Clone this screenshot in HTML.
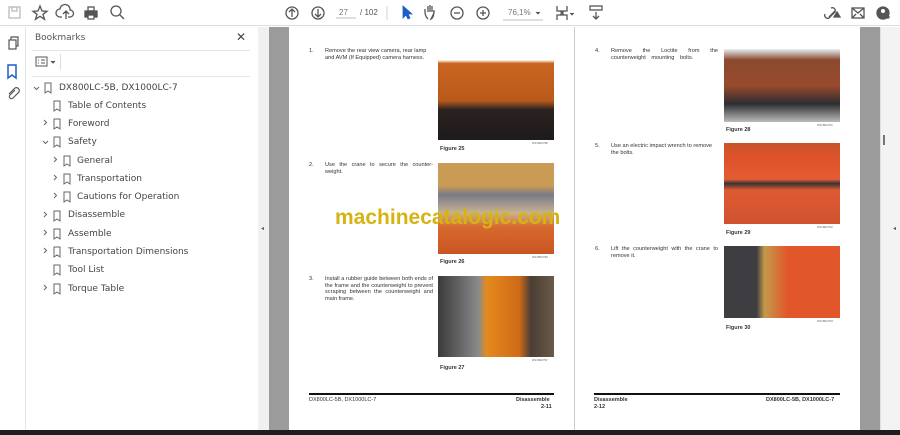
<!DOCTYPE html>
<html><head><meta charset="utf-8"><style>
*{margin:0;padding:0;box-sizing:border-box}
body{width:900px;height:435px;overflow:hidden;background:#fff;font-family:"Liberation Sans",sans-serif;position:relative;color:#333}
.a{position:absolute}
.tb{left:0;top:0;width:900px;height:26px;background:#fff;border-bottom:1px solid #ddd}
.bm{font-family:"DejaVu Sans","Liberation Sans",sans-serif;font-size:9px;color:#444;position:absolute;white-space:nowrap}
.pt{font-size:5.6px;color:#333;line-height:6.5px;position:absolute}
.fig{font-size:5.5px;font-weight:bold;position:absolute}
.code{font-size:3px;color:#666;position:absolute}
</style></head><body>
<div class="a tb"></div>
<svg class="a" style="left:0;top:0" width="900" height="26" fill="none" stroke="#555" stroke-width="1.3">
<rect x="9" y="7" width="11" height="11" stroke="#bbb"/><rect x="12" y="7" width="5" height="4" stroke="#bbb"/>
<path d="M40 6l2 5 5 .3-4 3 1.5 5-4.5-3-4.5 3 1.5-5-4-3 5-.3z"/>
<path d="M62 17h-2a4 4 0 0 1 0-8 5 5 0 0 1 10 1 3 3 0 0 1 0 7h-2M66 19v-8m-3 3l3-3 3 3"/>
<rect x="85" y="11" width="12" height="6" fill="#555"/><rect x="88" y="7" width="6" height="4"/><rect x="88" y="15" width="6" height="4" fill="#fff"/>
<circle cx="116" cy="11" r="5"/><path d="M120 15l4 4"/>
<circle cx="292" cy="13" r="6"/><path d="M292 17v-8m-3 3l3-3 3 3"/>
<circle cx="318" cy="13" r="6"/><path d="M318 9v8m-3-3l3 3 3-3"/>
<path d="M336 18h20" stroke="#ccc"/><path d="M387 6v14" stroke="#ddd"/>
<path d="M403 6v12l3-3 2 4 2-1-2-4h4z" fill="#1a5fc8" stroke="#1a5fc8" stroke-width=".8"/>
<path d="M428 19c-2-2-3-5-3-7v-3m3 3v-6m2 6v-7m2 7v-6m2 7v-3c0 5-1 8-3 9z"/>
<circle cx="457" cy="13" r="6"/><path d="M454 13h6"/>
<circle cx="483" cy="13" r="6"/><path d="M480 13h6m-3-3v6"/>
<path d="M503 20h40" stroke="#ccc"/><path d="M536 12l2 2 2-2" fill="#555" stroke-width=".8"/>
<path d="M557 6v5h10V6M557 20v-5h10v5M560 11l4 4M564 11l-4 4" />
<path d="M570 13l2 2 2-2" fill="#555" stroke-width=".8"/>
<rect x="590" y="6" width="12" height="4"/><path d="M596 12v7m-3-3l3 3 3-3"/>
<path d="M829 17l6-6m-4-3a3 3 0 0 1 4 4l-6 6a3 3 0 0 1-4-4"/><path d="M834 17l3-5 3 5z" fill="#555"/>
<rect x="852" y="8" width="12" height="10"/><path d="M852 8l6 5 6-5M852 18l4-4m8 4l-4-4"/>
<circle cx="883" cy="13" r="6" fill="#555"/><circle cx="883" cy="11" r="2" fill="#fff" stroke="none"/><path d="M888 15v4m-2-2h4" stroke="#555"/>
</svg>
<div class="a" style="left:339px;top:8px;font-size:8px;color:#777">27</div>
<div class="a" style="left:360px;top:8px;font-size:8px;color:#555">/ 102</div>
<div class="a" style="left:508px;top:8px;font-size:8px;color:#777">76,1%</div>

<div class="a" style="left:0;top:27px;width:26px;height:403px;background:#fff;border-right:1px solid #e5e5e5"></div>
<svg class="a" style="left:0;top:27px" width="26" height="80" fill="none" stroke="#555" stroke-width="1.2">
<rect x="9" y="13" width="7" height="9"/><path d="M11 13v-3h7v9h-2"/>
<path d="M8 38h8v13l-4-3-4 3z" stroke="#1a5fc8" stroke-width="1.5"/>
<path d="M15 63l-5 5a2 2 0 0 0 3 3l6-6a3 3 0 0 0-4-4l-6 6"/>
</svg>
<div class="a" style="left:26px;top:27px;width:232px;height:403px;background:#fff"></div>
<div class="bm" style="left:35px;top:33px;font-size:9px;color:#555">Bookmarks</div>
<div class="bm" style="left:236px;top:30px;font-size:12px;color:#444">✕</div>
<div class="a" style="left:32px;top:50px;width:218px;height:1px;background:#e5e5e5"></div>
<svg class="a" style="left:34px;top:54px" width="30" height="16" fill="none" stroke="#555"><rect x="2" y="3" width="11" height="9"/><path d="M4 6h1m2 0h4M4 9h1m2 0h4"/><path d="M17 7l2 2 2-2" fill="#555"/></svg>
<div class="a" style="left:60px;top:54px;width:1px;height:16px;background:#ddd"></div>
<div class="a" style="left:32px;top:76px;width:218px;height:1px;background:#e5e5e5"></div>
<svg class="a" style="left:30px;top:80px" width="160" height="220" fill="none" stroke="#666" stroke-width="1">
<path d="M4 7l2.5 2.5L9 7"/><path d="M15 3h6v10l-3-2-3 2z"/>
<path d="M24 21h6v10l-3-2-3 2z"/>
<path d="M14 40l2.5 2.5L14 45"/><path d="M24 39h6v10l-3-2-3 2z"/>
<path d="M13 61l2.5 2.5L18 61"/><path d="M24 57h6v10l-3-2-3 2z"/>
<path d="M24 77l2.5 2.5L24 82"/><path d="M34 76h6v10l-3-2-3 2z"/>
<path d="M24 95l2.5 2.5L24 100"/><path d="M34 94h6v10l-3-2-3 2z"/>
<path d="M24 113l2.5 2.5L24 118"/><path d="M34 112h6v10l-3-2-3 2z"/>
<path d="M14 132l2.5 2.5L14 137"/><path d="M24 131h6v10l-3-2-3 2z"/>
<path d="M14 150l2.5 2.5L14 155"/><path d="M24 149h6v10l-3-2-3 2z"/>
<path d="M14 168l2.5 2.5L14 173"/><path d="M24 167h6v10l-3-2-3 2z"/>
<path d="M24 185h6v10l-3-2-3 2z"/>
<path d="M14 205l2.5 2.5L14 210"/><path d="M24 204h6v10l-3-2-3 2z"/>
</svg>
<div class="bm" style="left:59px;top:83px">DX800LC-5B, DX1000LC-7</div>
<div class="bm" style="left:68px;top:101px">Table of Contents</div>
<div class="bm" style="left:68px;top:119px">Foreword</div>
<div class="bm" style="left:68px;top:137px">Safety</div>
<div class="bm" style="left:77px;top:156px">General</div>
<div class="bm" style="left:77px;top:174px">Transportation</div>
<div class="bm" style="left:77px;top:192px">Cautions for Operation</div>
<div class="bm" style="left:68px;top:210px">Disassemble</div>
<div class="bm" style="left:68px;top:229px">Assemble</div>
<div class="bm" style="left:68px;top:247px">Transportation Dimensions</div>
<div class="bm" style="left:68px;top:265px">Tool List</div>
<div class="bm" style="left:68px;top:284px">Torque Table</div>

<div class="a" style="left:258px;top:27px;width:11px;height:403px;background:#f0f0f0"></div>
<div class="a" style="left:261px;top:225px;font-size:6px;color:#555">◂</div>
<div class="a" style="left:269px;top:27px;width:20px;height:403px;background:#9b9b9b"></div>
<div class="a" style="left:289px;top:27px;width:571px;height:403px;background:#fff"></div>
<div class="a" style="left:574px;top:27px;width:1px;height:403px;background:#ccc"></div>
<div class="a" style="left:860px;top:27px;width:20px;height:403px;background:#9b9b9b"></div>
<div class="a" style="left:880px;top:27px;width:20px;height:403px;background:#f3f3f3;border-left:1px solid #e0e0e0"></div>
<div class="a" style="left:883px;top:135px;width:2px;height:10px;background:#777"></div>
<div class="a" style="left:893px;top:225px;font-size:6px;color:#555">◂</div>
<div class="a" style="left:0;top:430px;width:900px;height:5px;background:#1e1e1e"></div>

<div class="pt" style="left:309px;top:48px">1.</div>
<div class="pt" style="left:325px;top:48px;width:108px">Remove the rear view camera, rear lamp and AVM (If Equipped) camera harness.</div>
<div class="a" style="left:438px;top:53px;width:116px;height:87px;background:linear-gradient(180deg,#fff 0 8%,#c9651f 12%,#b85a1c 55%,#2a2220 65%,#1e1b1c 100%)"></div>
<div class="code" style="left:532px;top:141px">DS1802798</div>
<div class="fig" style="left:440px;top:146px">Figure 25</div>
<div class="pt" style="left:309px;top:162px">2.</div>
<div class="pt" style="left:325px;top:162px;width:108px;text-align:justify;word-spacing:2px">Use the crane to secure the counter-weight.</div>
<div class="a" style="left:438px;top:163px;width:116px;height:91px;background:linear-gradient(180deg,#c99b54 0 25%,#7a7a88 35%,#c7b38e 55%,#d86a2c 70%,#c85522 100%)"></div>
<div class="code" style="left:532px;top:255px">DS1802799</div>
<div class="fig" style="left:440px;top:259px">Figure 26</div>
<div class="pt" style="left:309px;top:276px">3.</div>
<div class="pt" style="left:325px;top:276px;width:108px;text-align:justify">Install a rubber guide between both ends of the frame and the counterweight to prevent scraping between the counterweight and main frame.</div>
<div class="a" style="left:438px;top:276px;width:116px;height:81px;background:linear-gradient(90deg,#3a3a3a 0,#8a8a8a 35%,#e48a1c 42%,#d06a18 70%,#4a3f35 80%,#6a5a48 100%)"></div>
<div class="code" style="left:532px;top:358px">DS1802797</div>
<div class="fig" style="left:440px;top:365px">Figure 27</div>
<div class="a" style="left:309px;top:393px;width:245px;height:2px;background:#111"></div>
<div class="fig" style="left:309px;top:397px;font-weight:normal">DX800LC-5B, DX1000LC-7</div>
<div class="fig" style="left:516px;top:397px">Disassemble</div>
<div class="fig" style="left:541px;top:404px">2-11</div>

<div class="pt" style="left:595px;top:48px">4.</div>
<div class="pt" style="left:611px;top:48px;width:107px;text-align:justify;word-spacing:4px">Remove the Loctite from the counterweight mounting bolts.</div>
<div class="a" style="left:724px;top:49px;width:116px;height:73px;background:linear-gradient(180deg,#e8eef3 0,#8a4a30 15%,#9a4a2c 50%,#2d2d30 75%,#bbb 100%)"></div>
<div class="code" style="left:817px;top:123px">DS1802791</div>
<div class="fig" style="left:726px;top:127px">Figure 28</div>
<div class="pt" style="left:595px;top:143px">5.</div>
<div class="pt" style="left:611px;top:143px;width:107px">Use an electric impact wrench to remove the bolts.</div>
<div class="a" style="left:724px;top:143px;width:116px;height:81px;background:linear-gradient(180deg,#c85528 0,#e0532a 20%,#e25c33 45%,#333 50%,#df5a32 58%,#cf5230 100%)"></div>
<div class="code" style="left:817px;top:225px">DS1802792</div>
<div class="fig" style="left:726px;top:230px">Figure 29</div>
<div class="pt" style="left:595px;top:246px">6.</div>
<div class="pt" style="left:611px;top:246px;width:107px;text-align:justify">Lift the counterweight with the crane to remove it.</div>
<div class="a" style="left:724px;top:246px;width:116px;height:72px;background:linear-gradient(90deg,#3d3d42 0,#3d3d42 28%,#c49a4a 35%,#e2562c 55%,#e2562c 100%)"></div>
<div class="code" style="left:817px;top:319px">DS1802793</div>
<div class="fig" style="left:726px;top:325px">Figure 30</div>
<div class="a" style="left:594px;top:393px;width:246px;height:2px;background:#111"></div>
<div class="fig" style="left:594px;top:397px">Disassemble</div>
<div class="fig" style="left:594px;top:404px">2-12</div>
<div class="fig" style="left:766px;top:397px">DX800LC-5B, DX1000LC-7</div>

<div class="a" style="left:335px;top:206px;font-size:21px;font-weight:bold;color:#d6b310">machinecatalogic.com</div>
</body></html>
